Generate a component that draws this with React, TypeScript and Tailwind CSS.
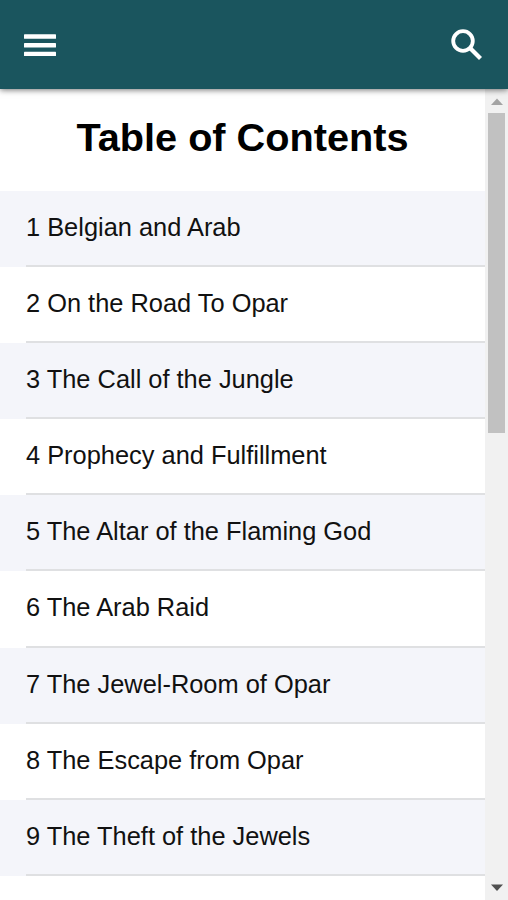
const chapters = [
  'Belgian and Arab', 'On the Road To Opar', 'The Call of the Jungle',
  'Prophecy and Fulfillment', 'The Altar of the Flaming God', 'The Arab Raid',
  'The Jewel-Room of Opar', 'The Escape from Opar', 'The Theft of the Jewels',
];

export default function App() {
  return (
    <div className="flex h-[900px] w-[508px] flex-col overflow-hidden bg-white font-['Liberation_Sans',Arial,sans-serif] text-black">
      <header className="relative z-10 flex h-[89px] shrink-0 items-center justify-between bg-[#1a555e] pl-6 pr-[25px] text-white shadow-[0_1px_6px_rgba(0,0,0,0.55)]">
        <button aria-label="Menu">
          <svg width="32" height="24" viewBox="0 0 32 24" fill="currentColor">
            <rect y="1.2" width="32" height="4.6" rx="0.6" />
            <rect y="10" width="32" height="4.6" rx="0.6" />
            <rect y="18.7" width="32" height="4.4" rx="0.6" />
          </svg>
        </button>
        <button aria-label="Search">
          <svg width="32" height="32" viewBox="0 0 32 32" fill="none" stroke="currentColor">
            <circle cx="12" cy="12" r="9.8" strokeWidth="3.8" />
            <path d="M19 19l10.5 10.6" strokeWidth="4.2" />
          </svg>
        </button>
      </header>
      <div className="flex min-h-0 flex-1">
        <main className="flex-1 overflow-hidden">
          <h1 className="flex h-[102px] items-center justify-center pb-[4px] text-[39.7px] font-bold">Table of Contents</h1>
          <ol>
            {chapters.map((title, i) => (
              <li key={title} className="h-[76.1px] pl-[26px] odd:bg-[#f4f5fa]">
                <div className="flex h-full items-center border-b-2 border-[#dfe0e2] pb-[2px] text-[25.4px] text-[#111]">{i + 1} {title}</div>
              </li>
            ))}
          </ol>
        </main>
        <aside className="flex w-[23px] shrink-0 flex-col items-center bg-[#f1f1f1]">
          <svg className="h-6 w-[23px] shrink-0" viewBox="0 0 23 24"><path d="M6 16l6-6.5 6 6.5z" fill="#a3a3a3" /></svg>
          <div className="h-[320px] w-[17px] bg-[#c1c1c1]" />
          <svg className="mt-auto h-6 w-[23px] shrink-0" viewBox="0 0 23 24"><path d="M6 8.5l6 6.5 6-6.5z" fill="#505050" /></svg>
        </aside>
      </div>
    </div>
  );
}
